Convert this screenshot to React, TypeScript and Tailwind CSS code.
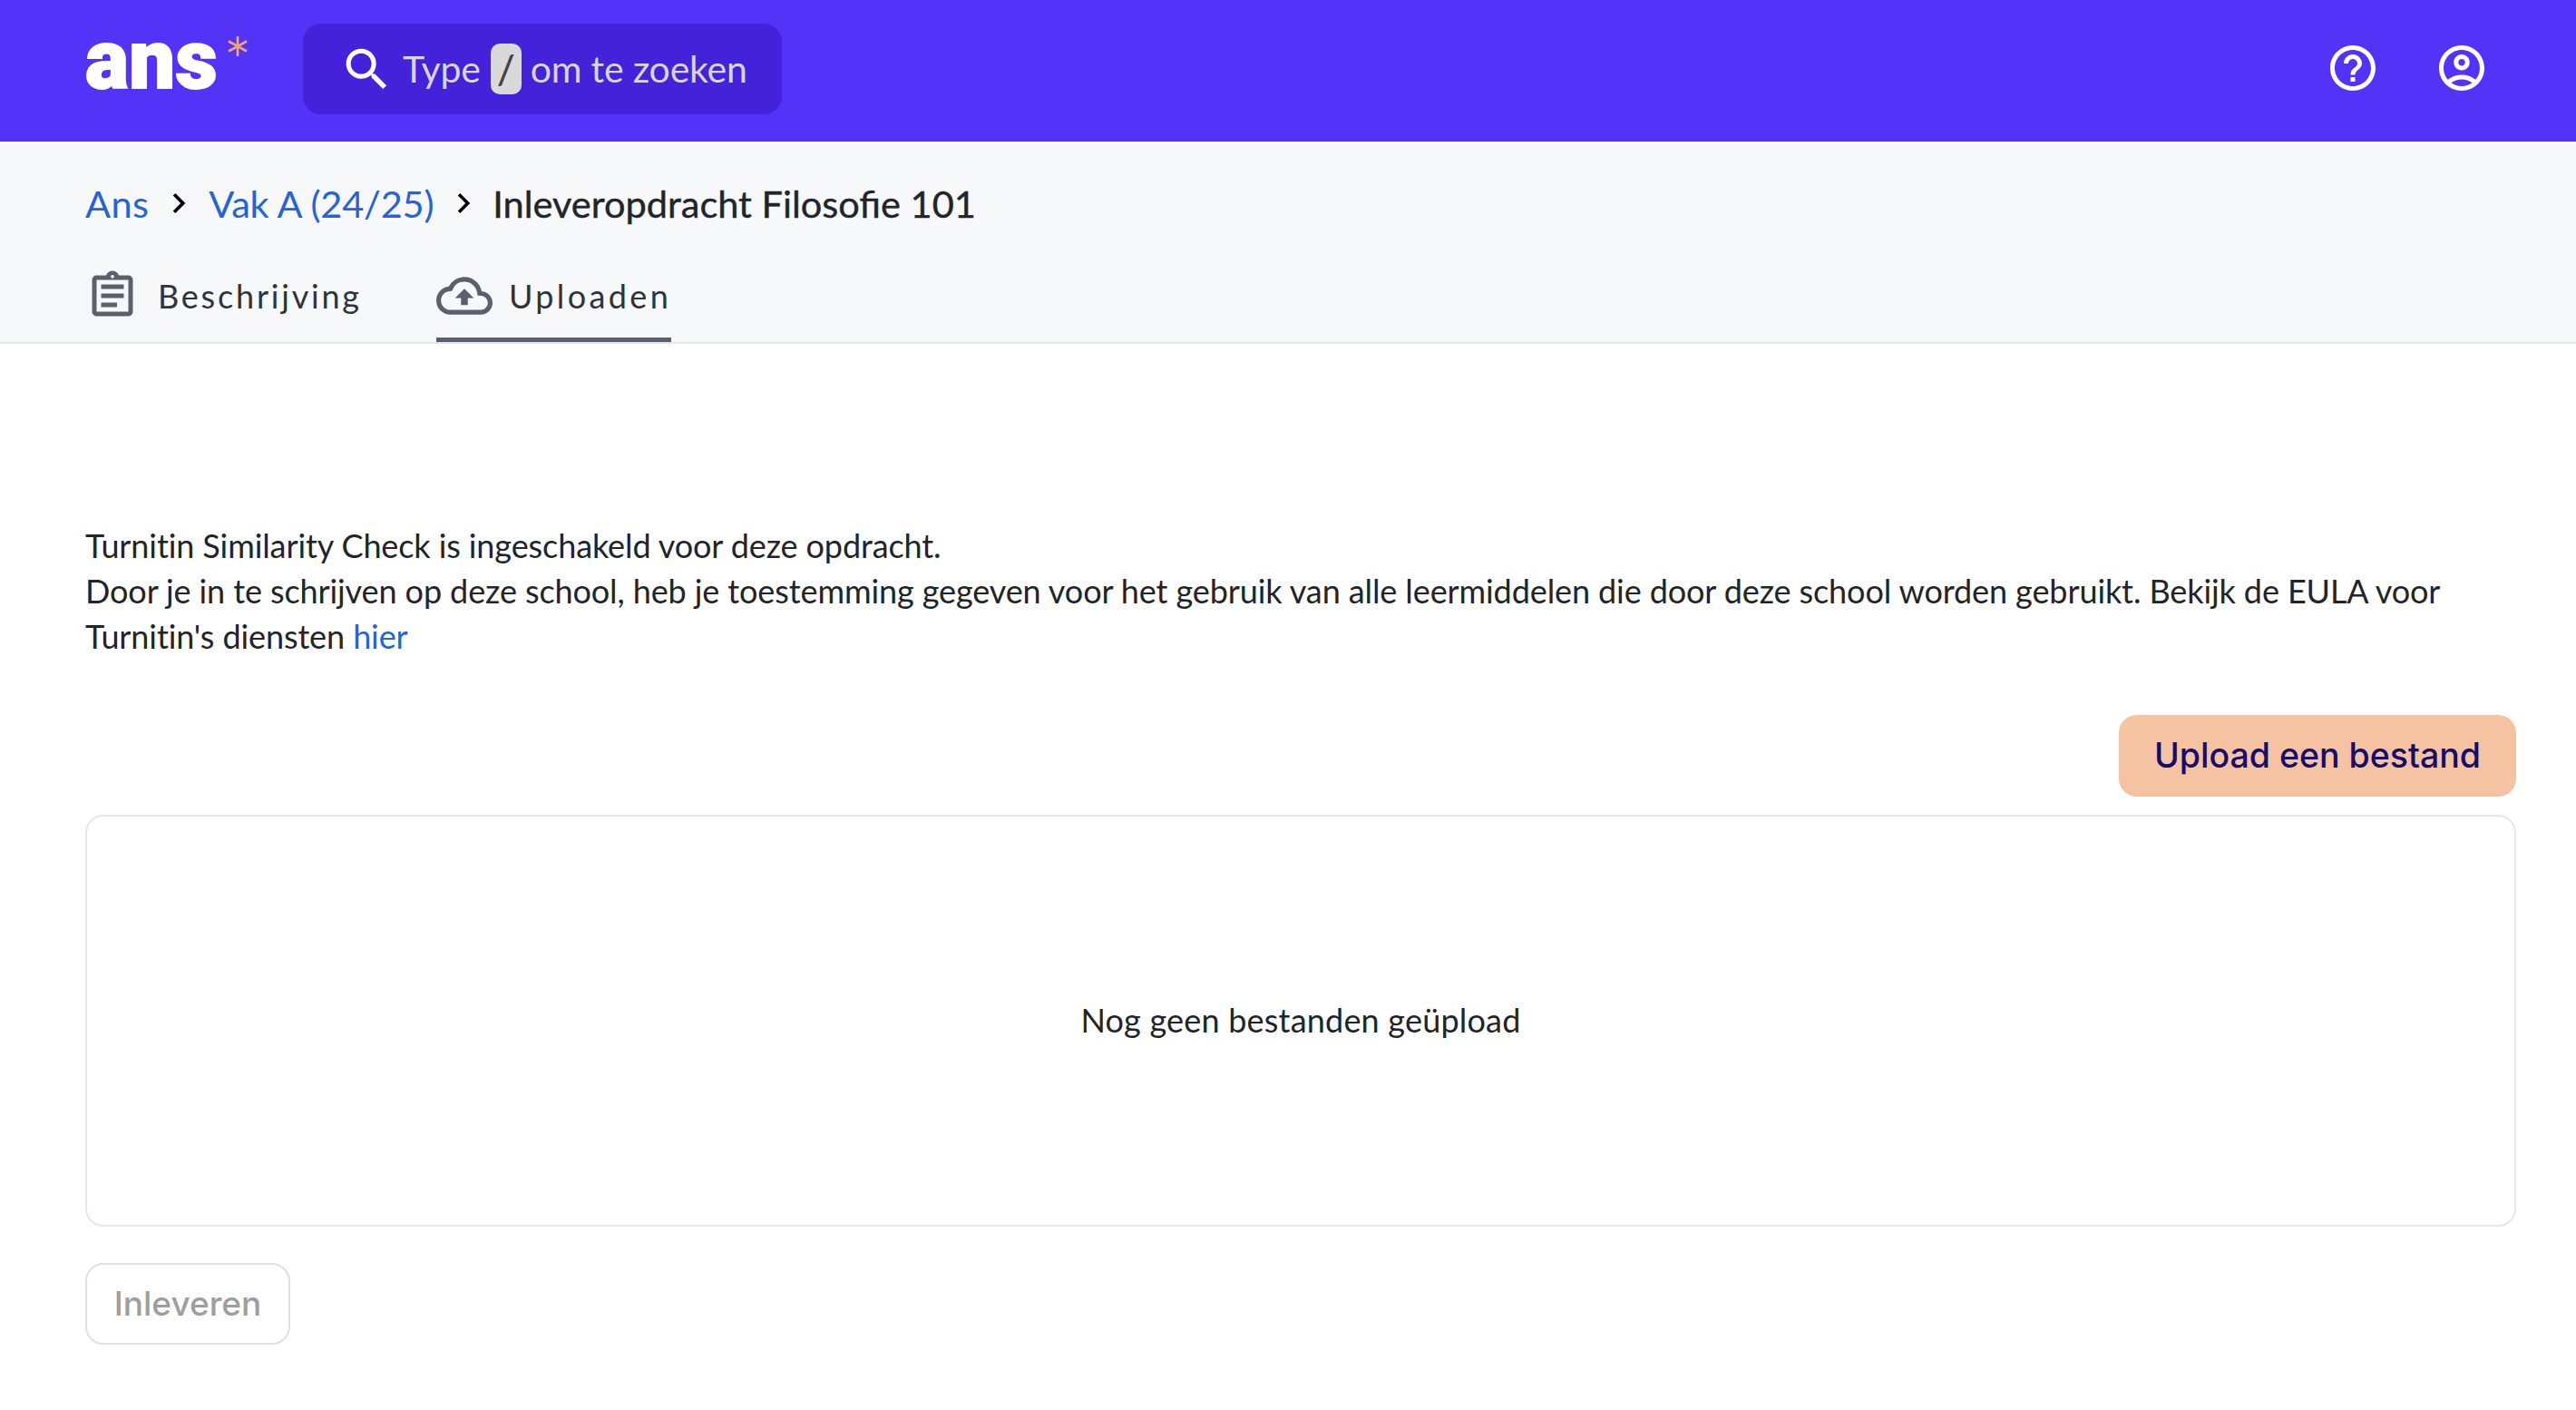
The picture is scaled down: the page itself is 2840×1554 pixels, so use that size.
import { MdSearch, MdHelpOutline, MdOutlineAccountCircle, MdOutlineAssignment, MdOutlineCloudUpload, MdChevronRight } from "react-icons/md";

const body = "font-['Lato','Noto_Sans',sans-serif]";
const btn = "font-['Inter','Noto_Sans',sans-serif]";

function Logo() {
  return (
    <div className="flex items-start w-[180px] h-[74px] shrink-0">
      <span className="font-['Roboto',sans-serif] font-black text-[90px] leading-[74px] tracking-[0.5px] text-white h-[74px] mt-[-11px] [-webkit-text-stroke:2px_white]">ans</span>
      <svg className="ml-[10px] mt-[-2px] shrink-0" width="24" height="24" viewBox="0 0 24 24" stroke="#f3a76f" strokeWidth="2.6" fill="none">
        <path d="M12 1v22M2 6.5l20 11M22 6.5l-20 11" />
      </svg>
    </div>
  );
}

export default function App() {
  return (
    <div className={`min-h-[1554px] bg-white ${body} text-[#212529]`}>
      <header className="h-[156px] bg-[#5433f9] flex items-center pl-[94px] pr-[96px]">
        <Logo />
        <div className="ml-[60px] h-[100px] w-[528px] mt-[-4px] rounded-[20px] bg-[#4322d9] flex items-center pl-[40px] text-[#d4d6e0] text-[41px] tracking-[-0.2px]">
          <MdSearch className="text-white shrink-0 mr-[9px]" size={61} />
          <span>Type</span>
          <span className="ml-[11px] mr-[10px] w-[34px] h-[56px] rounded-[10px] bg-[#d9d9d9] text-[#3f4348] flex items-center justify-center text-[44px] font-medium">/</span>
          <span>om te zoeken</span>
        </div>
        <div className="ml-auto flex items-center gap-[60px] mt-[-6px] text-white">
          <MdHelpOutline size={60} />
          <MdOutlineAccountCircle size={60} />
        </div>
      </header>

      <section className="h-[223px] bg-[#f6f8fa] border-b-[2px] border-[#e5e7eb] pl-[94px] flex flex-col">
        <nav className="flex items-center h-[44px] mt-[46px] text-[41.5px] text-[#2563d9]">
          <span className="tracking-[0.4px]">Ans</span>
          <MdChevronRight className="text-black mx-[11px]" size={44} />
          <span className="tracking-[-0.2px]">Vak A (24/25)</span>
          <MdChevronRight className="text-black ml-[11px] mr-[10px]" size={44} />
          <span className="text-[#212529] [-webkit-text-stroke:0.4px_#212529]">Inleveropdracht Filosofie 101</span>
        </nav>
        <div className="flex mt-auto gap-[82px] text-[36px] text-[#2f343b]">
          <div className="flex items-center gap-[20px] h-[80px] pb-[18px] border-b-[5px] border-transparent">
            <MdOutlineAssignment className="text-[#5b616c]" size={60} />
            <span className="tracking-[2.8px]">Beschrijving</span>
          </div>
          <div className="flex items-center gap-[18px] h-[80px] pb-[18px] border-b-[5px] border-[#5b616c]">
            <MdOutlineCloudUpload className="text-[#5b616c]" size={62} />
            <span className="tracking-[3.4px]">Uploaden</span>
          </div>
        </div>
      </section>

      <main className="pl-[94px] pr-[66px]">
        <p className="pt-[197px] text-[36px] leading-[50px] tracking-[-0.1px]">
          Turnitin Similarity Check is ingeschakeld voor deze opdracht.<br />
          Door je in te schrijven op deze school, heb je toestemming gegeven voor het gebruik van alle leermiddelen die door deze school worden gebruikt. Bekijk de EULA voor Turnitin's diensten <a className="text-[#2563d9]">hier</a>
        </p>
        <div className="flex justify-end mt-[62px]">
          <button className={`${btn} h-[90px] w-[438px] rounded-[20px] bg-[#f5c2a2] text-[#170b6b] text-[37.5px] font-medium`}>Upload een bestand</button>
        </div>
        <div className="mt-[20px] h-[454px] rounded-[20px] border-[2px] border-[#e7e7e7] flex items-center justify-center text-[36px] tracking-[0.2px] pb-[2px]">
          Nog geen bestanden geüpload
        </div>
        <button className={`${btn} mt-[40px] h-[90px] w-[226px] rounded-[20px] border-[2.5px] border-[#e0e0e0] text-[#9e9e9e] text-[37px] font-medium`}>Inleveren</button>
      </main>
    </div>
  );
}
